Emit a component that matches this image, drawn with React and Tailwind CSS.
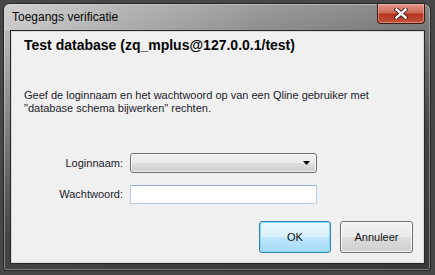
import React from "react";

export default function App() {
  const ui = { fontFamily: '"Liberation Sans", Arial, sans-serif' };
  return (
    <div className="w-[435px] h-[275px] bg-[#474747] pl-[3px] pt-[3px] overflow-hidden" style={ui}>
      <div className="w-[428px] h-[268px] rounded-t-[7px] rounded-b-[3px] border border-[#262626] shadow-[inset_0_0_0_1px_rgba(255,255,255,0.35)] bg-[linear-gradient(165deg,#c9c9c9_0%,#a0a0a0_18%,#747474_38%,#444444_62%,#383838_100%)] flex flex-col overflow-hidden">
        {/* title bar */}
        <div className="h-[27px] flex items-start justify-between bg-[linear-gradient(to_right,rgba(215,215,215,0.55)_0%,rgba(180,180,180,0.35)_30%,rgba(120,120,120,0.1)_60%,rgba(90,90,90,0)_100%)]">
          <div className="ml-[8px] mt-[5px] text-[12px] leading-[16px] text-[#0a0a0a]">Toegangs verificatie</div>
          <div className="mr-[5px] w-[48px] h-[20px] rounded-b-[4px] border border-t-0 border-[#3a1a14] shadow-[inset_0_0_0_1px_rgba(255,200,190,0.45)] bg-[linear-gradient(to_bottom,#e19a8c_0%,#cf6a57_45%,#b3351f_55%,#c5533c_100%)] flex items-center justify-center">
            <svg width="14" height="11" viewBox="0 0 14 11">
              <path d="M2.5 1.5 L11.5 9.5 M11.5 1.5 L2.5 9.5" stroke="#3b1a14" strokeWidth="4.2" strokeLinecap="square" />
              <path d="M2.5 1.5 L11.5 9.5 M11.5 1.5 L2.5 9.5" stroke="#ffffff" strokeWidth="2.4" strokeLinecap="square" />
            </svg>
          </div>
        </div>
        {/* client */}
        <div className="flex-1 pl-[7px] pr-[6px] pb-[7px] flex">
          <div className="flex-1 bg-[#f0f0f0] border border-[#d9d9d9] shadow-[0_0_0_1px_#262626] flex flex-col">
            <div className="pl-[12px] mt-[5px] text-[14px] leading-[17px] font-bold text-[#050505]">
              Test database (zq_mplus@127.0.0.1/test)
            </div>
            <div className="pl-[12px] mt-[35px] text-[11px] leading-[13px] text-[#1c1c2c]">
              <div>Geef de loginnaam en het wachtwoord op van een Qline gebruiker met</div>
              <div>"database schema bijwerken" rechten.</div>
            </div>
            <div className="mt-[38px] flex items-center">
              <div className="w-[118px] pr-[7px] text-right text-[11px] leading-[13px] text-[#1c1c2c]">Loginnaam:</div>
              <div className="w-[187px] h-[20px] rounded-[3px] border border-[#707070] shadow-[inset_0_0_0_1px_rgba(255,255,255,0.7)] bg-[linear-gradient(to_bottom,#f2f2f2_0%,#ebebeb_48%,#dddddd_52%,#cfcfcf_100%)] flex items-center justify-end pr-[6px]">
                <svg width="7" height="4" viewBox="0 0 7 4">
                  <path d="M0 0 H7 L3.5 4 Z" fill="#000" />
                </svg>
              </div>
            </div>
            <div className="mt-[12px] flex items-center">
              <div className="w-[118px] pr-[7px] text-right text-[11px] leading-[13px] text-[#1c1c2c]">Wachtwoord:</div>
              <div className="w-[187px] h-[19px] bg-white border border-[#b5cfe7] border-t-[#8fb3d6]"></div>
            </div>
            <div className="mt-[17px] flex justify-end pr-[10px] gap-[9px]">
              <div className="w-[72px] h-[32px] rounded-[3px] border border-[#3c7fb1] shadow-[inset_0_0_0_1px_#7fdcf8] bg-[linear-gradient(to_bottom,#eaf6fd_0%,#d9f0fc_48%,#bee6fd_52%,#a7d9f5_100%)] flex items-center justify-center text-[11px] text-[#111]">
                OK
              </div>
              <div className="w-[73px] h-[32px] rounded-[3px] border border-[#707070] shadow-[inset_0_0_0_1px_rgba(255,255,255,0.8)] bg-[linear-gradient(to_bottom,#f2f2f2_0%,#ebebeb_48%,#dddddd_52%,#cfcfcf_100%)] flex items-center justify-center text-[11px] text-[#111]">
                Annuleer
              </div>
            </div>
          </div>
        </div>
      </div>
    </div>
  );
}
